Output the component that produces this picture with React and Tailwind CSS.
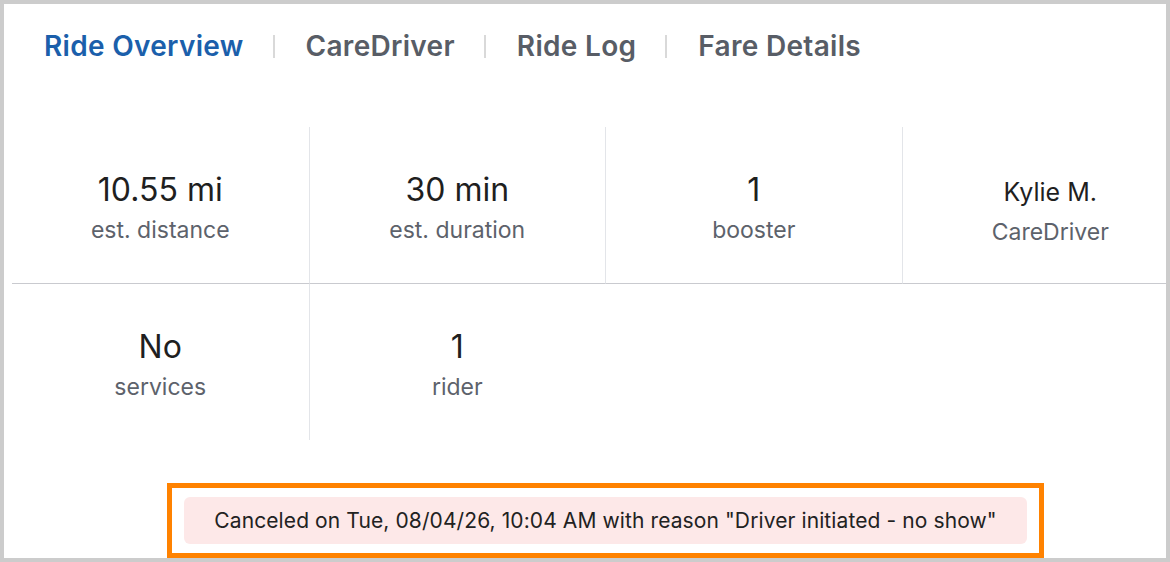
import React from "react";

const stats = [
  { value: "10.55 mi", label: "est. distance" },
  { value: "30 min", label: "est. duration" },
  { value: "1", label: "booster" },
  { value: "Kylie M.", label: "CareDriver", small: true },
  { value: "No", label: "services" },
  { value: "1", label: "rider" },
];

const tabs = ["Ride Overview", "CareDriver", "Ride Log", "Fare Details"];

export default function App() {
  return (
    <div
      className="w-[1170px] h-[562px] bg-[#cccccc] p-[4px] overflow-hidden"
      style={{ fontFamily: "Inter, 'Noto Sans', sans-serif" }}
    >
      <div className="w-full h-full bg-white overflow-hidden flex flex-col">
        <div className="flex items-center h-[84px] pl-[40px] pt-[1px]">
          {tabs.map((t, i) => (
            <React.Fragment key={t}>
              {i > 0 && <div className="w-[2px] h-[23px] bg-[#d9d9d9] ml-[29px] mr-[31px]" />}
              <span
                className={
                  "text-[28px] font-semibold tracking-[0.3px] " +
                  (i === 0 ? "text-[#1b5fab]" : "text-[#585d66]")
                }
              >
                {t}
              </span>
            </React.Fragment>
          ))}
        </div>
        <div className="pl-[8px] pt-[40px]">
          <div className="grid grid-cols-[repeat(4,296.5px)] w-[1186px]">
            {stats.map((s, i) => (
              <div
                key={i}
                className={
                  "pt-[6px] flex flex-col items-center justify-center " +
                  (i % 4 !== 0 ? "border-l border-[#e3e5e9] " : "") +
                  (i < 4 ? "h-[157px] border-b border-b-[#c9cacf]" : "h-[156px]")
                }
              >
                <div
                  className={
                    "text-[#1f1f1f] leading-[38px] " +
                    (s.small ? "text-[25px] mt-[4px]" : "text-[32px]")
                  }
                >
                  {s.value}
                </div>
                <div className="text-[23px] text-[#5d626b] leading-[30px] mt-[6px]">
                  {s.label}
                </div>
              </div>
            ))}
          </div>
        </div>
        <div className="flex pt-[43px] pl-[163px]">
          <div className="border-[5px] border-[#ff8200] px-[12px] py-[9px]">
            <div className="bg-[#fde8e8] rounded-[6px] w-[843px] h-[47px] flex items-center justify-center text-[21px] tracking-[0.1px] text-[#222222]">
              Canceled on Tue, 08/04/26, 10:04 AM with reason "Driver initiated - no show"
            </div>
          </div>
        </div>
      </div>
    </div>
  );
}
